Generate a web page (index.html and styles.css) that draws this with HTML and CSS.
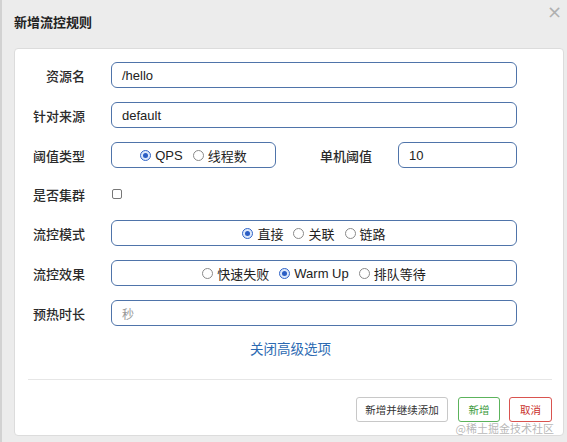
FILE: index.html
```html
<!DOCTYPE html>
<html lang="zh-CN">
<head>
<meta charset="utf-8">
<title>新增流控规则</title>
<link rel="stylesheet" href="styles.css">
</head>
<body>
<div class="modal">
  <div class="header">
    <h4 class="title">新增流控规则</h4>
    <span class="close">×</span>
  </div>
  <div class="panel">
    <div class="row">
      <span class="label">资源名</span>
      <div class="input wide">/hello</div>
    </div>
    <div class="row">
      <span class="label">针对来源</span>
      <div class="input wide">default</div>
    </div>
    <div class="row">
      <span class="label">阈值类型</span>
      <div class="box small">
        <span class="opt"><span class="radio on"></span>QPS</span>
        <span class="opt"><span class="radio"></span>线程数</span>
      </div>
      <span class="label label2">单机阈值</span>
      <div class="input narrow">10</div>
    </div>
    <div class="row row-check">
      <span class="label">是否集群</span>
      <span class="check"></span>
    </div>
    <div class="row">
      <span class="label">流控模式</span>
      <div class="box wide">
        <span class="opt"><span class="radio on"></span>直接</span>
        <span class="opt"><span class="radio"></span>关联</span>
        <span class="opt"><span class="radio"></span>链路</span>
      </div>
    </div>
    <div class="row">
      <span class="label">流控效果</span>
      <div class="box wide">
        <span class="opt"><span class="radio"></span>快速失败</span>
        <span class="opt"><span class="radio on"></span>Warm Up</span>
        <span class="opt"><span class="radio"></span>排队等待</span>
      </div>
    </div>
    <div class="row last">
      <span class="label">预热时长</span>
      <div class="input wide placeholder">秒</div>
    </div>
    <div class="advanced"><a class="link">关闭高级选项</a></div>
    <div class="divider"></div>
    <div class="footer">
      <button class="btn">新增并继续添加</button>
      <button class="btn btn-green">新增</button>
      <button class="btn btn-red">取消</button>
      <span class="watermark">@稀土掘金技术社区</span>
    </div>
  </div>
</div>
</body>
</html>
```
FILE: styles.css
```css
html, body {
  margin: 0;
  padding: 0;
}
body {
  width: 567px;
  height: 442px;
  background: #ececec;
  font-family: "Liberation Sans", "Noto Sans CJK SC", sans-serif;
  color: #333;
  overflow: hidden;
}
.modal {
  height: 442px;
  box-sizing: border-box;
  border-left: 2px solid #d2d2d2;
  padding: 0 3px 0 12px;
}
.header {
  display: flex;
  justify-content: space-between;
  align-items: flex-start;
  height: 48px;
}
.title {
  margin: 14px 0 0 0;
  font-size: 13px;
  line-height: 16px;
  font-weight: bold;
  color: #222;
  font-family: "Noto Sans CJK SC", sans-serif;
}
.close {
  margin-top: 3px;
  margin-right: 2px;
  font-size: 18px;
  line-height: 18px;
  color: #b0b0b0;
  font-family: "DejaVu Sans", sans-serif;
}
.panel {
  position: relative;
  background: #fff;
  border: 1px solid #dcdcdc;
  border-radius: 4px;
  height: 388px;
  box-sizing: border-box;
  padding: 13px 11px 0 0;
}
.row {
  display: flex;
  align-items: center;
  height: 26px;
  margin-bottom: 14px;
}
.row-check {
  height: 24px;
}
.row.last {
  margin-bottom: 0;
}
.label {
  width: 70px;
  text-align: right;
  font-size: 13px;
  font-weight: 500;
  color: #2a2a2a;
  font-family: "Noto Sans CJK SC", sans-serif;
  margin-right: 26px;
  flex: none;
}
.label2 {
  width: 52px;
  margin-left: 44px;
}
.input, .box {
  height: 26px;
  box-sizing: border-box;
  border: 1px solid #4f74aa;
  border-radius: 6px;
  font-size: 13px;
  display: flex;
  align-items: center;
  flex: none;
}
.input {
  padding-left: 10px;
  color: #222;
}
.wide {
  width: 406px;
}
.small {
  width: 165px;
}
.narrow {
  width: 119px;
}
.placeholder {
  color: #999;
  font-size: 12px;
  font-family: "Noto Sans CJK SC", sans-serif;
}
.box {
  justify-content: center;
}
.opt {
  display: flex;
  align-items: center;
  margin: 0 5px;
  font-size: 13px;
  color: #222;
}
.radio {
  width: 11px;
  height: 11px;
  box-sizing: border-box;
  border: 1px solid #8a8a8a;
  border-radius: 50%;
  margin-right: 4px;
  background: #fff;
  position: relative;
}
.radio.on {
  border-color: #3366c8;
  background: #dce8fb;
}
.radio.on::after {
  content: "";
  position: absolute;
  left: 2px;
  top: 2px;
  width: 5px;
  height: 5px;
  border-radius: 50%;
  background: #2a5dc4;
}
.check {
  width: 10px;
  height: 10px;
  box-sizing: border-box;
  border: 1px solid #777;
  border-radius: 2px;
  margin-left: 1px;
}
.advanced {
  margin-top: 12px;
  height: 20px;
  line-height: 20px;
  padding-left: 235px;
}
.link {
  color: #2c6ab2;
  font-size: 13.5px;
  font-family: "Noto Sans CJK SC", sans-serif;
  text-decoration: none;
}
.divider {
  margin: 21px 0 0 13px;
  height: 1px;
  background: #e6e6e6;
}
.footer {
  display: flex;
  justify-content: flex-end;
  margin-top: 17px;
  position: relative;
}
.btn {
  height: 25px;
  box-sizing: border-box;
  background: #fff;
  border: 1px solid #c8c8c8;
  border-radius: 3px;
  font-size: 10.5px;
  font-family: "Noto Sans CJK SC", sans-serif;
  color: #333;
  padding: 0 10px;
  margin-left: 10px;
}
.btn:first-child {
  width: 92px;
  padding: 0;
}
.btn-green {
  width: 42px;
  padding: 0;
  border-color: #5cb35c;
  color: #3d9b3d;
}
.btn-red {
  width: 43px;
  padding: 0;
  margin-left: 9px;
  border-color: #d9534f;
  color: #c9302c;
}
.watermark {
  position: absolute;
  right: -2px;
  top: 25px;
  font-size: 11px;
  line-height: 13px;
  color: rgba(160, 160, 160, 0.75);
  font-family: "Noto Sans CJK SC", sans-serif;
  pointer-events: none;
}
```
